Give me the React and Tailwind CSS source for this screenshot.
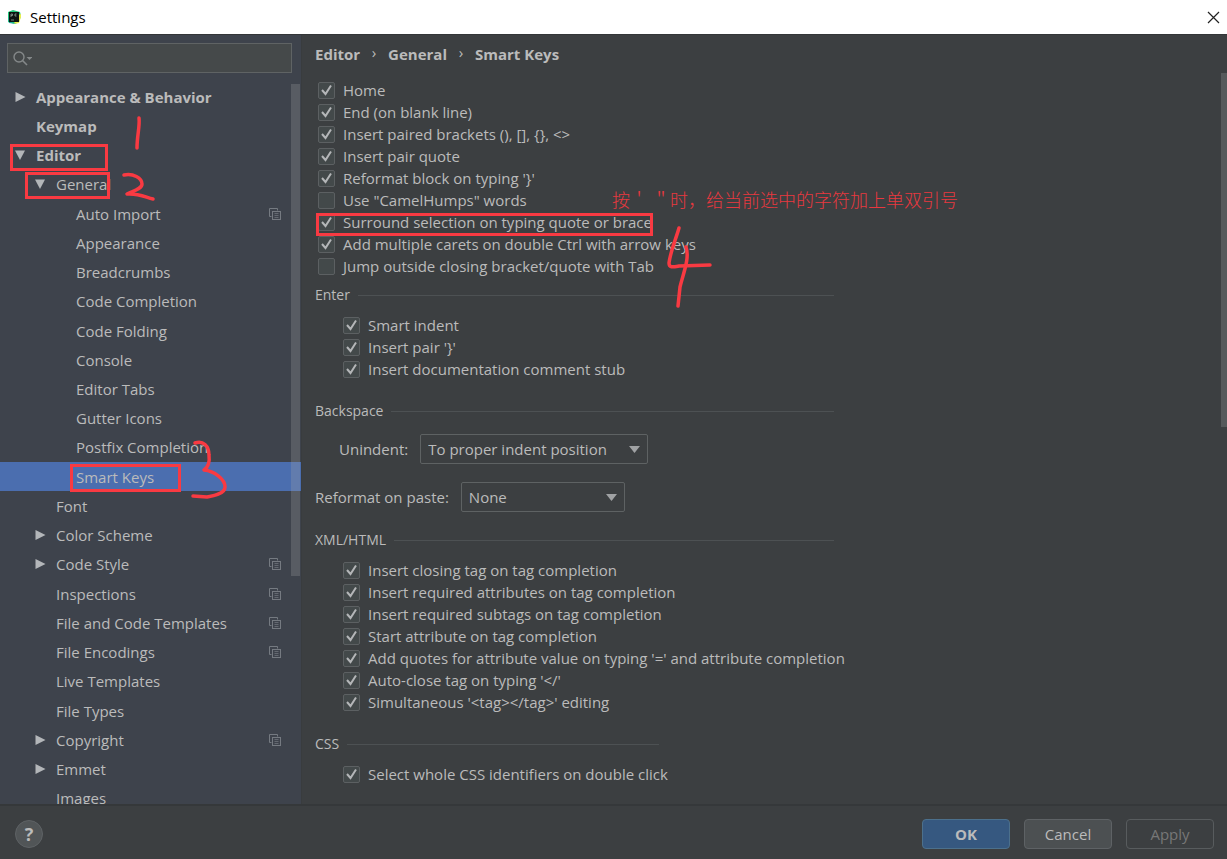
import { useState } from 'react'

const treeItems = [
  { label: 'Appearance & Behavior', level: 0, arrow: 'right' },
  { label: 'Keymap', level: 0 },
  { label: 'Editor', level: 0, arrow: 'down' },
  { label: 'General', level: 1, arrow: 'down' },
  { label: 'Auto Import', level: 2, project: true },
  { label: 'Appearance', level: 2 },
  { label: 'Breadcrumbs', level: 2 },
  { label: 'Code Completion', level: 2 },
  { label: 'Code Folding', level: 2 },
  { label: 'Console', level: 2 },
  { label: 'Editor Tabs', level: 2 },
  { label: 'Gutter Icons', level: 2 },
  { label: 'Postfix Completion', level: 2 },
  { label: 'Smart Keys', level: 2 },
  { label: 'Font', level: 1 },
  { label: 'Color Scheme', level: 1, arrow: 'right' },
  { label: 'Code Style', level: 1, arrow: 'right', project: true },
  { label: 'Inspections', level: 1, project: true },
  { label: 'File and Code Templates', level: 1, project: true },
  { label: 'File Encodings', level: 1, project: true },
  { label: 'Live Templates', level: 1 },
  { label: 'File Types', level: 1 },
  { label: 'Copyright', level: 1, arrow: 'right', project: true },
  { label: 'Emmet', level: 1, arrow: 'right' },
  { label: 'Images', level: 1 }
]

const levelClasses = ['pl-[14px] font-bold', 'pl-[34px]', 'pl-[54px]']

const generalOptions = [
  ['Home', true],
  ['End (on blank line)', true],
  ['Insert paired brackets (), [], {}, <>', true],
  ['Insert pair quote', true],
  ["Reformat block on typing '}'", true],
  ['Use "CamelHumps" words', false],
  ['Surround selection on typing quote or brace', true],
  ['Add multiple carets on double Ctrl with arrow keys', true],
  ['Jump outside closing bracket/quote with Tab', false]
]

const enterOptions = [
  ['Smart indent', true],
  ["Insert pair '}'", true],
  ['Insert documentation comment stub', true]
]

const xmlOptions = [
  ['Insert closing tag on tag completion', true],
  ['Insert required attributes on tag completion', true],
  ['Insert required subtags on tag completion', true],
  ['Start attribute on tag completion', true],
  ["Add quotes for attribute value on typing '=' and attribute completion", true],
  ["Auto-close tag on typing '</'", true],
  ["Simultaneous '<tag></tag>' editing", true]
]

const cssOptions = [['Select whole CSS identifiers on double click', true]]

function AppIcon() {
  return (
    <svg className="h-[15px] w-[15px]" viewBox="0 0 15 15" aria-hidden="true">
      <path d="M1 2 6 0l7 2 1 4-2 6-4 2-7-2z" fill="#21c77b" />
      <path d="M11 5l3-1 0 3-2 6-5 1 1-3z" fill="#e9ee4f" />
      <path d="M1 7l3 5 5 2-7-1z" fill="#1fa8a0" />
      <rect x="2" y="2" width="10" height="10" fill="#0c1411" />
      <path d="M4 7V4h1.500v1.500H4M9.500 4H8v2h1.500M4 10h3" fill="none" stroke="#8fa39b" strokeWidth="0.8" />
    </svg>
  )
}

function ProjectIcon() {
  return (
    <svg className="h-3 w-3 shrink-0" viewBox="0 0 12 12" fill="none" stroke="#757a81" aria-hidden="true">
      <path d="M2.500 8.500h-2v-8h8v2" />
      <rect x="3.500" y="3.500" width="8" height="8" />
      <path d="M5.500 5.500h4M5.500 7.500h4M5.500 9.500h4" strokeWidth="0.7" />
    </svg>
  )
}

function TreeArrow({ direction }) {
  return (
    <svg className="h-3 w-3 shrink-0" viewBox="0 0 12 12" fill="#b3b6b9" aria-hidden="true">
      {direction === 'right' && <path d="M1.500 1 11.500 6l-10 5z" />}
      {direction === 'down' && <path d="M1 1.500h10L6 11z" />}
    </svg>
  )
}

function Sidebar({ selected, onSelect }) {
  return (
    <aside className="relative flex w-[302px] shrink-0 flex-col overflow-hidden border-r border-[#393c3e] bg-[#3e434c]">
      <div className="relative mt-2 mr-[9px] mb-[9px] ml-[7px] shrink-0">
        <input
          type="text"
          aria-label="Search settings"
          className="block h-[30px] w-full border border-[#5f6364] bg-[#45494a] pl-8 text-[#bbbbbb] outline-none"
        />
        <svg className="absolute top-[7px] left-[5px] h-4 w-5" viewBox="0 0 20 16" fill="none" stroke="#848889" aria-hidden="true">
          <circle cx="7" cy="7" r="5" strokeWidth="1.400" />
          <path d="M10.500 10.500 15 15" strokeWidth="1.600" />
          <path d="M14.500 7h6l-3 3z" fill="#848889" stroke="none" />
        </svg>
      </div>
      <ul className="grid h-[731px] shrink-0 auto-rows-fr">
        {treeItems.map(item => (
          <li key={item.label} className="flex">
            <button
              type="button"
              onClick={() => onSelect(item.label)}
              className={`flex w-full items-center gap-[10px] pr-[20px] text-left ${levelClasses[item.level]} ${
                selected === item.label ? 'bg-[#4b6eaf]' : ''
              }`}
            >
              <TreeArrow direction={item.arrow} />
              <span className="flex-1 whitespace-nowrap">{item.label}</span>
              {item.project && <ProjectIcon />}
            </button>
          </li>
        ))}
      </ul>
      <div className="absolute top-[49px] right-[1px] h-[492px] w-[9px] bg-[#a6a6a6]/25"></div>
    </aside>
  )
}

function Checkbox({ label, defaultChecked }) {
  return (
    <label className="flex h-[22px] items-center gap-2 whitespace-nowrap">
      <span className="relative flex">
        <input
          type="checkbox"
          defaultChecked={defaultChecked}
          className="peer h-[17px] w-[17px] appearance-none rounded-xs border border-[#5c6062] bg-[#43494a]"
        />
        <svg
          className="pointer-events-none absolute inset-0 hidden h-[17px] w-[17px] peer-checked:block"
          viewBox="0 0 17 17"
          fill="none"
          stroke="#b4b6b8"
          strokeWidth="2"
          aria-hidden="true"
        >
          <path d="M4 8 7.500 12 13 3.500" />
        </svg>
      </span>
      {label}
    </label>
  )
}

function OptionList({ options }) {
  return options.map(([label, checked]) => (
    <Checkbox key={label} label={label} defaultChecked={checked} />
  ))
}

function GroupTitle({ children }) {
  return (
    <div className="flex h-[22px] items-center gap-2">
      <h2 className="text-[14px]">{children}</h2>
      <div className="h-px flex-1 bg-[#4d5153]"></div>
    </div>
  )
}

function Dropdown({ id, width, options }) {
  return (
    <div className={`relative ${width}`}>
      <select
        id={id}
        className="block h-[30px] w-full appearance-none rounded-xs border border-[#5e6263] bg-transparent pl-[7px] outline-none"
      >
        {options.map(option => (
          <option key={option}>{option}</option>
        ))}
      </select>
      <svg className="pointer-events-none absolute top-[12px] right-2 h-[7px] w-3" viewBox="0 0 12 7" fill="#a0a2a4" aria-hidden="true">
        <path d="M1 0h11L6.500 7z" />
      </svg>
    </div>
  )
}

function SmartKeysPanel() {
  return (
    <main className="relative flex-1 overflow-hidden bg-[#3c3f41] pt-[7px] pl-[13px]">
      <nav aria-label="Breadcrumb" className="flex h-6 items-center font-bold">
        <a href="#editor">Editor</a>
        <span className="w-7 pb-1 text-center font-normal">›</span>
        <a href="#general">General</a>
        <span className="w-7 pb-1 text-center font-normal">›</span>
        <a href="#smart-keys">Smart Keys</a>
      </nav>

      <div className="mt-[13px] w-[519px] max-w-full">
        <div className="pl-[3px]">
          <OptionList options={generalOptions} />
        </div>

        <section className="mt-[7px]">
          <GroupTitle>Enter</GroupTitle>
          <div className="mt-2 pl-7">
            <OptionList options={enterOptions} />
          </div>
        </section>

        <section className="mt-5">
          <GroupTitle>Backspace</GroupTitle>
          <div className="mt-3 flex items-center gap-3 pl-6">
            <label htmlFor="unindent">Unindent:</label>
            <Dropdown
              id="unindent"
              width="w-[228px]"
              options={['To proper indent position', 'To nearest indent position', 'Disabled']}
            />
          </div>
        </section>

        <div className="mt-[18px] flex items-center gap-3">
          <label htmlFor="reformat">Reformat on paste:</label>
          <Dropdown id="reformat" width="w-[164px]" options={['None', 'Indent block', 'Indent each line', 'Reformat block']} />
        </div>

        <section className="mt-[17px]">
          <GroupTitle>XML/HTML</GroupTitle>
          <div className="mt-2 pl-7">
            <OptionList options={xmlOptions} />
          </div>
        </section>

        <section className="mt-5 w-[344px]">
          <GroupTitle>CSS</GroupTitle>
          <div className="mt-2 pl-7">
            <OptionList options={cssOptions} />
          </div>
        </section>
      </div>

      <div className="absolute top-[38px] right-0 h-[354px] w-[6px] bg-[#56595b]"></div>
    </main>
  )
}

// Hand-drawn step marks that float over the dialog
function Annotations() {
  return (
    <div className="pointer-events-none absolute inset-0 overflow-hidden">
      <svg className="absolute top-0 left-0 h-[320px] w-[720px] overflow-visible" viewBox="0 0 720 320" fill="none" stroke="#f93a42" strokeWidth="3" aria-hidden="true">
        <rect x="11.500" y="145.500" width="95" height="24" />
        <rect x="26.500" y="173.500" width="82" height="24" />
        <rect x="71.500" y="465.500" width="108" height="25" />
        <rect x="317.500" y="214.500" width="334" height="20" />
        <g strokeWidth="3.500" strokeLinecap="round" strokeLinejoin="round">
          <path d="M139 118C140 126 137 136 137 148" />
          <path d="M124 175C133 173 142 178 142 184C142 189 133 191 127 194C138 193 145 197 153 199" />
          <path d="M195 443C203 440 209 446 209 455C210 463 207 468 204 470C214 471 225 479 225 487C225 494 213 496 207 497L193 496" />
          <path d="M679 228C676 239 671 249 669 263C669 268 673 267 679 266L710 265" />
          <path d="M686 247C690 258 683 274 680 287L678 306" />
        </g>
      </svg>
      <p className="absolute top-[187px] left-[612px] font-['Noto_Sans_CJK_SC',sans-serif] text-[18px] leading-6 font-light whitespace-nowrap text-[#e8383f]">
        按＇ ＂时，给当前选中的字符加上单双引号
      </p>
    </div>
  )
}

function App() {
  const [selected, setSelected] = useState('Smart Keys')

  return (
    <div className="relative flex h-screen flex-col overflow-hidden bg-[#3c3f41] font-['Open_Sans','Noto_Sans_CJK_SC',sans-serif] text-[15px] leading-5 text-[#bbbbbb]">
      <header className="flex h-[34px] shrink-0 items-center bg-white pr-[7px] pl-[7px] text-black">
        <AppIcon />
        <h1 className="ml-2 flex-1">Settings</h1>
        <button type="button" aria-label="Close" className="flex">
          <svg className="h-[13px] w-[13px]" viewBox="0 0 13 13" stroke="#222222" strokeWidth="1.200" aria-hidden="true">
            <path d="M1 1l11 11M12 1 1 12" />
          </svg>
        </button>
      </header>

      <div className="flex min-h-0 flex-1 border-t border-[#333638]">
        <Sidebar selected={selected} onSelect={setSelected} />
        <SmartKeysPanel />
      </div>

      <footer className="flex h-[55px] shrink-0 items-center gap-[14px] border-t-2 border-[#35383a] pt-[2px] pr-[13px] pl-[15px]">
        <button
          type="button"
          aria-label="Help"
          className="mr-auto h-7 w-7 rounded-full border border-[#5e6265] bg-[#515557] text-[18px] font-bold"
        >
          ?
        </button>
        <button type="button" className="h-[30px] w-[88px] rounded-sm border border-[#4c708c] bg-[#365880] font-bold">
          OK
        </button>
        <button type="button" className="h-[30px] w-[88px] rounded-sm border border-[#5e6265] bg-[#4c5052]">
          Cancel
        </button>
        <button type="button" disabled className="h-[30px] w-[88px] rounded-sm border border-[#585c5e] text-[#777777]">
          Apply
        </button>
      </footer>

      <Annotations />
    </div>
  )
}

export default App
